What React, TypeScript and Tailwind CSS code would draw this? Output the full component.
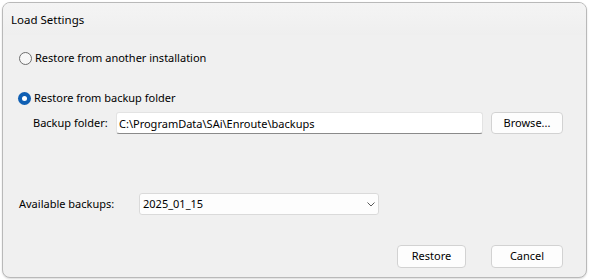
import { useState } from 'react';

function Radio({ checked, label, onClick }: { checked: boolean; label: string; onClick: () => void }) {
    return (
        <button type="button" onClick={onClick} className="flex items-center gap-[3px] h-4 text-left">
            {checked ? (
                <span className="w-[13px] h-[13px] rounded-full bg-[#0f5fb3] flex items-center justify-center">
                    <span className="w-[5px] h-[5px] rounded-full bg-white" />
                </span>
            ) : (
                <span className="w-[13px] h-[13px] rounded-full border border-[#6e6e6e] bg-[#f7f7f7]" />
            )}
            <span>{label}</span>
        </button>
    );
}

export default function App() {
    const [mode, setMode] = useState<'install' | 'folder'>('folder');
    const [folder, setFolder] = useState('C:\\ProgramData\\SAi\\Enroute\\backups');

    return (
        <div className="w-[589px] h-[280px] bg-white p-[2px] text-[11px] text-black" style={{ fontFamily: '"Noto Sans", "Open Sans", sans-serif' }}>
            <div className="h-[276px] rounded-lg border border-[#b9b9b9] bg-[#f0f0f0] flex flex-col overflow-hidden shadow-[0_1px_2px_rgba(0,0,0,0.15)]">
                <div className="h-[32px] shrink-0 bg-gradient-to-b from-[#f4f4f4] to-[#efefef] flex items-center pl-[8px] pt-[1px] text-[11.5px]">
                    Load Settings
                </div>

                <div className="flex flex-col pl-[16px] pr-[23px]">
                    <div className="mt-[15px]">
                        <Radio checked={mode === 'install'} label="Restore from another installation" onClick={() => setMode('install')} />
                    </div>
                    <div className="mt-[24px] -ml-px">
                        <Radio checked={mode === 'folder'} label="Restore from backup folder" onClick={() => setMode('folder')} />
                    </div>

                    <div className="mt-[6px] flex items-center h-[22px] pl-[14px]">
                        <span className="w-[83px]">Backup folder:</span>
                        <input
                            value={folder}
                            onChange={(e) => setFolder(e.target.value)}
                            className="w-[367px] h-[22px] bg-white border border-[#e3e3e3] border-b-[#8a8a8a] rounded-[3px] px-[2px] outline-none"
                        />
                        <button className="ml-[8px] w-[72px] h-[22px] rounded-[4px] border border-[#d2d2d2] bg-[#fdfdfd]">
                            Browse...
                        </button>
                    </div>

                    <div className="mt-[59px] flex items-center h-[22px]">
                        <span className="w-[120px]">Available backups:</span>
                        <div className="w-[240px] h-[22px] bg-[#fdfdfd] border border-[#dadada] rounded-[3px] flex items-center justify-between pl-[3px] pr-[3px]">
                            <span>2025_01_15</span>
                            <svg width="8" height="5" viewBox="0 0 8 5" fill="none" stroke="#5a5a5a" strokeWidth="1">
                                <path d="M0.5 0.5l3.5 3.5 3.5-3.5" />
                            </svg>
                        </div>
                    </div>

                    <div className="mt-[30px] flex justify-end gap-[25px]">
                        <button className="w-[69px] h-[23px] rounded-[4px] border border-[#d2d2d2] bg-[#fdfdfd]">Restore</button>
                        <button className="w-[72px] h-[23px] rounded-[4px] border border-[#d2d2d2] bg-[#fdfdfd]">Cancel</button>
                    </div>
                </div>
            </div>
        </div>
    );
}
